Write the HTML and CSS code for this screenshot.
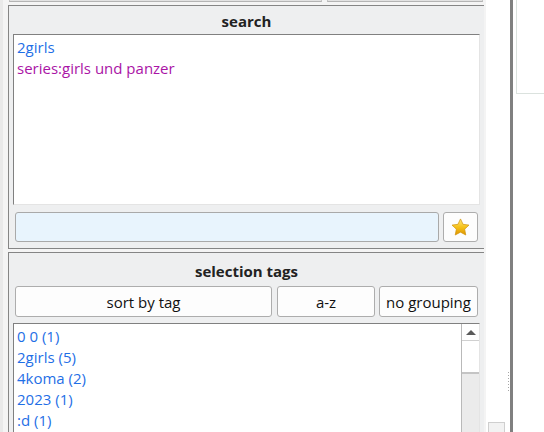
FILE: index.html
```html
<!DOCTYPE html>
<html>
<head>
<meta charset="utf-8">
<link rel="stylesheet" href="styles.css">
</head>
<body>
<div class="app">
  <div class="left">
    <div class="topstrip"><div class="tb tb1"></div><div class="tb tb2"></div></div>
    <section class="panel search">
      <div class="ptitle">search</div>
      <div class="box searchbox">
        <div class="tag blue">2girls</div>
        <div class="tag purple">series:girls und panzer</div>
      </div>
      <div class="inputrow">
        <input class="inp" type="text">
        <button class="btn star" aria-label="favourite searches">
          <svg width="21" height="21" viewBox="0 0 24 24">
            <defs>
              <linearGradient id="sg" x1="0" y1="0" x2="0" y2="1">
                <stop offset="0" stop-color="#ffe680"/>
                <stop offset="0.5" stop-color="#f6c31a"/>
                <stop offset="1" stop-color="#de9400"/>
              </linearGradient>
            </defs>
            <path d="M12 2.2l2.95 6.2 6.75.85-4.95 4.65 1.3 6.7L12 17.3l-6.05 3.3 1.3-6.7-4.95-4.65 6.75-.85z" fill="url(#sg)" stroke="#d0930c" stroke-width="0.8" stroke-linejoin="round"/>
          </svg>
        </button>
      </div>
    </section>
    <section class="panel sel">
      <div class="ptitle">selection tags</div>
      <div class="btnrow">
        <button class="btn b-sort">sort by tag</button>
        <button class="btn b-az">a-z</button>
        <button class="btn b-grp">no grouping</button>
      </div>
      <div class="box listbox">
        <div class="list">
          <div class="tag blue">0 0 (1)</div>
          <div class="tag blue">2girls (5)</div>
          <div class="tag blue">4koma (2)</div>
          <div class="tag blue">2023 (1)</div>
          <div class="tag blue">:d (1)</div>
        </div>
        <div class="scroll">
          <div class="up"><span class="tri"></span></div>
          <div class="thumb"></div>
          <div class="track"></div>
        </div>
      </div>
    </section>
  </div>
  <div class="side">
    <div class="gutter">
      <div class="handle"></div>
      <div class="corner"></div>
    </div>
    <div class="bar"></div>
    <div class="rightpane">
      <div class="rbox"></div>
    </div>
  </div>
</div>
</body>
</html>
```
FILE: styles.css
```css
* { box-sizing: border-box; margin: 0; padding: 0; }
html, body { width: 544px; height: 432px; overflow: hidden; }
body {
  background: #f4f4f4;
  font-family: "Open Sans", "Noto Sans", sans-serif;
  font-size: 15px;
  color: #000;
}
.app { display: flex; height: 432px; }

.left {
  width: 486px;
  flex: none;
  padding-left: 8px;
  padding-right: 2px;
  background: linear-gradient(to right, #e9e9e9 0 3px, #f4f4f4 3px);
  display: flex;
  flex-direction: column;
  overflow: hidden;
}

.topstrip { flex: none; height: 5px; display: flex; gap: 5px; padding-left: 1px; padding-right: 1px; }
.tb { height: 2px; background: #e2e2e2; border-bottom: 1px solid #b4b4b4; border-left: 1px solid #c4c4c4; border-right: 1px solid #c4c4c4; }
.tb1 { width: 313px; }
.tb2 { flex: 1; }

.panel {
  background: #eeeff0;
  border-top: 1px solid #858585;
  border-left: 1px solid #858585;
  border-bottom: 1px solid #858585;
  padding: 0 4px;
  display: flex;
  flex-direction: column;
}
.search { flex: none; height: 244px; padding-bottom: 6px; }
.sel { margin-top: 3px; flex: none; height: 240px; }

.ptitle {
  flex: none;
  height: 28px;
  line-height: 28px;
  padding-top: 1px;
  text-align: center;
  font-weight: bold;
  font-size: 15px;
  color: #222;
}
.sel .ptitle { height: 33px; padding-top: 4px; }

.box {
  background: #fff;
  border-top: 1px solid #808080;
  border-left: 1px solid #808080;
  border-right: 1px solid #e4e4e4;
  border-bottom: 1px solid #e4e4e4;
}
.searchbox { flex: none; height: 171px; padding: 2px 3px; }
.tag { line-height: 21px; height: 21px; white-space: nowrap; }
.blue { color: #1f6fe6; }
.purple { color: #aa14a6; }

.inputrow { flex: none; display: flex; gap: 4px; margin: 7px 2px 0; height: 30px; }
.inp {
  flex: 1;
  height: 30px;
  background: #e8f4fd;
  border: 1px solid #a9a9a9;
  border-radius: 3px;
  outline: none;
}
.btn {
  font-family: inherit;
  font-size: 15px;
  color: #111;
  background: #fdfdfd;
  border: 1px solid #adadad;
  border-radius: 3px;
  height: 31px;
}
.star { width: 35px; height: 30px; display: flex; align-items: center; justify-content: center; }
.star svg { display: block; }

.btnrow { flex: none; display: flex; margin: 0 2px; height: 31px; }
.b-sort { flex: 1; }
.b-az { width: 98px; margin-left: 5px; }
.b-grp { width: 99px; margin-left: 4px; }

.listbox { margin-top: 6px; flex: 1 1 0; min-height: 0; display: flex; }
.list { flex: 1; padding: 2px 3px; overflow: hidden; }
.scroll { width: 18px; display: flex; flex-direction: column; border-left: 1px solid #b9b9b9; }
.up { flex: none; height: 17px; background: #fff; border-bottom: 1px solid #d0d0d0; display: flex; justify-content: center; align-items: center; }
.tri { width: 0; height: 0; border-left: 5px solid transparent; border-right: 5px solid transparent; border-bottom: 5px solid #5a5a5a; }
.thumb { flex: none; height: 33px; background: #fff; border-bottom: 2px solid #c4c4c4; }
.track { flex: 1; background: #ebebeb; }

.side { flex: 1; display: flex; background: #fff; }
.gutter { width: 24px; display: flex; flex-direction: column; align-items: flex-end; }
.handle {
  margin-top: 372px;
  width: 1px;
  height: 21px;
  margin-right: 1px;
  background: repeating-linear-gradient(to bottom, #a6a6a6 0 1px, transparent 1px 3px);
}
.corner {
  margin-top: auto;
  align-self: flex-start;
  margin-left: 2px;
  width: 17px;
  height: 10px;
  background: #f2f2f2;
  border-top: 1px solid #cfcfcf;
  border-left: 1px solid #cfcfcf;
  border-right: 1px solid #cfcfcf;
}
.bar { width: 3px; background: #808080; }
.rightpane { flex: 1; padding-left: 3px; }
.rbox { height: 94px; border-left: 1px solid #dbe2de; border-bottom: 1px solid #dbe2de; background: #fff; }
```
